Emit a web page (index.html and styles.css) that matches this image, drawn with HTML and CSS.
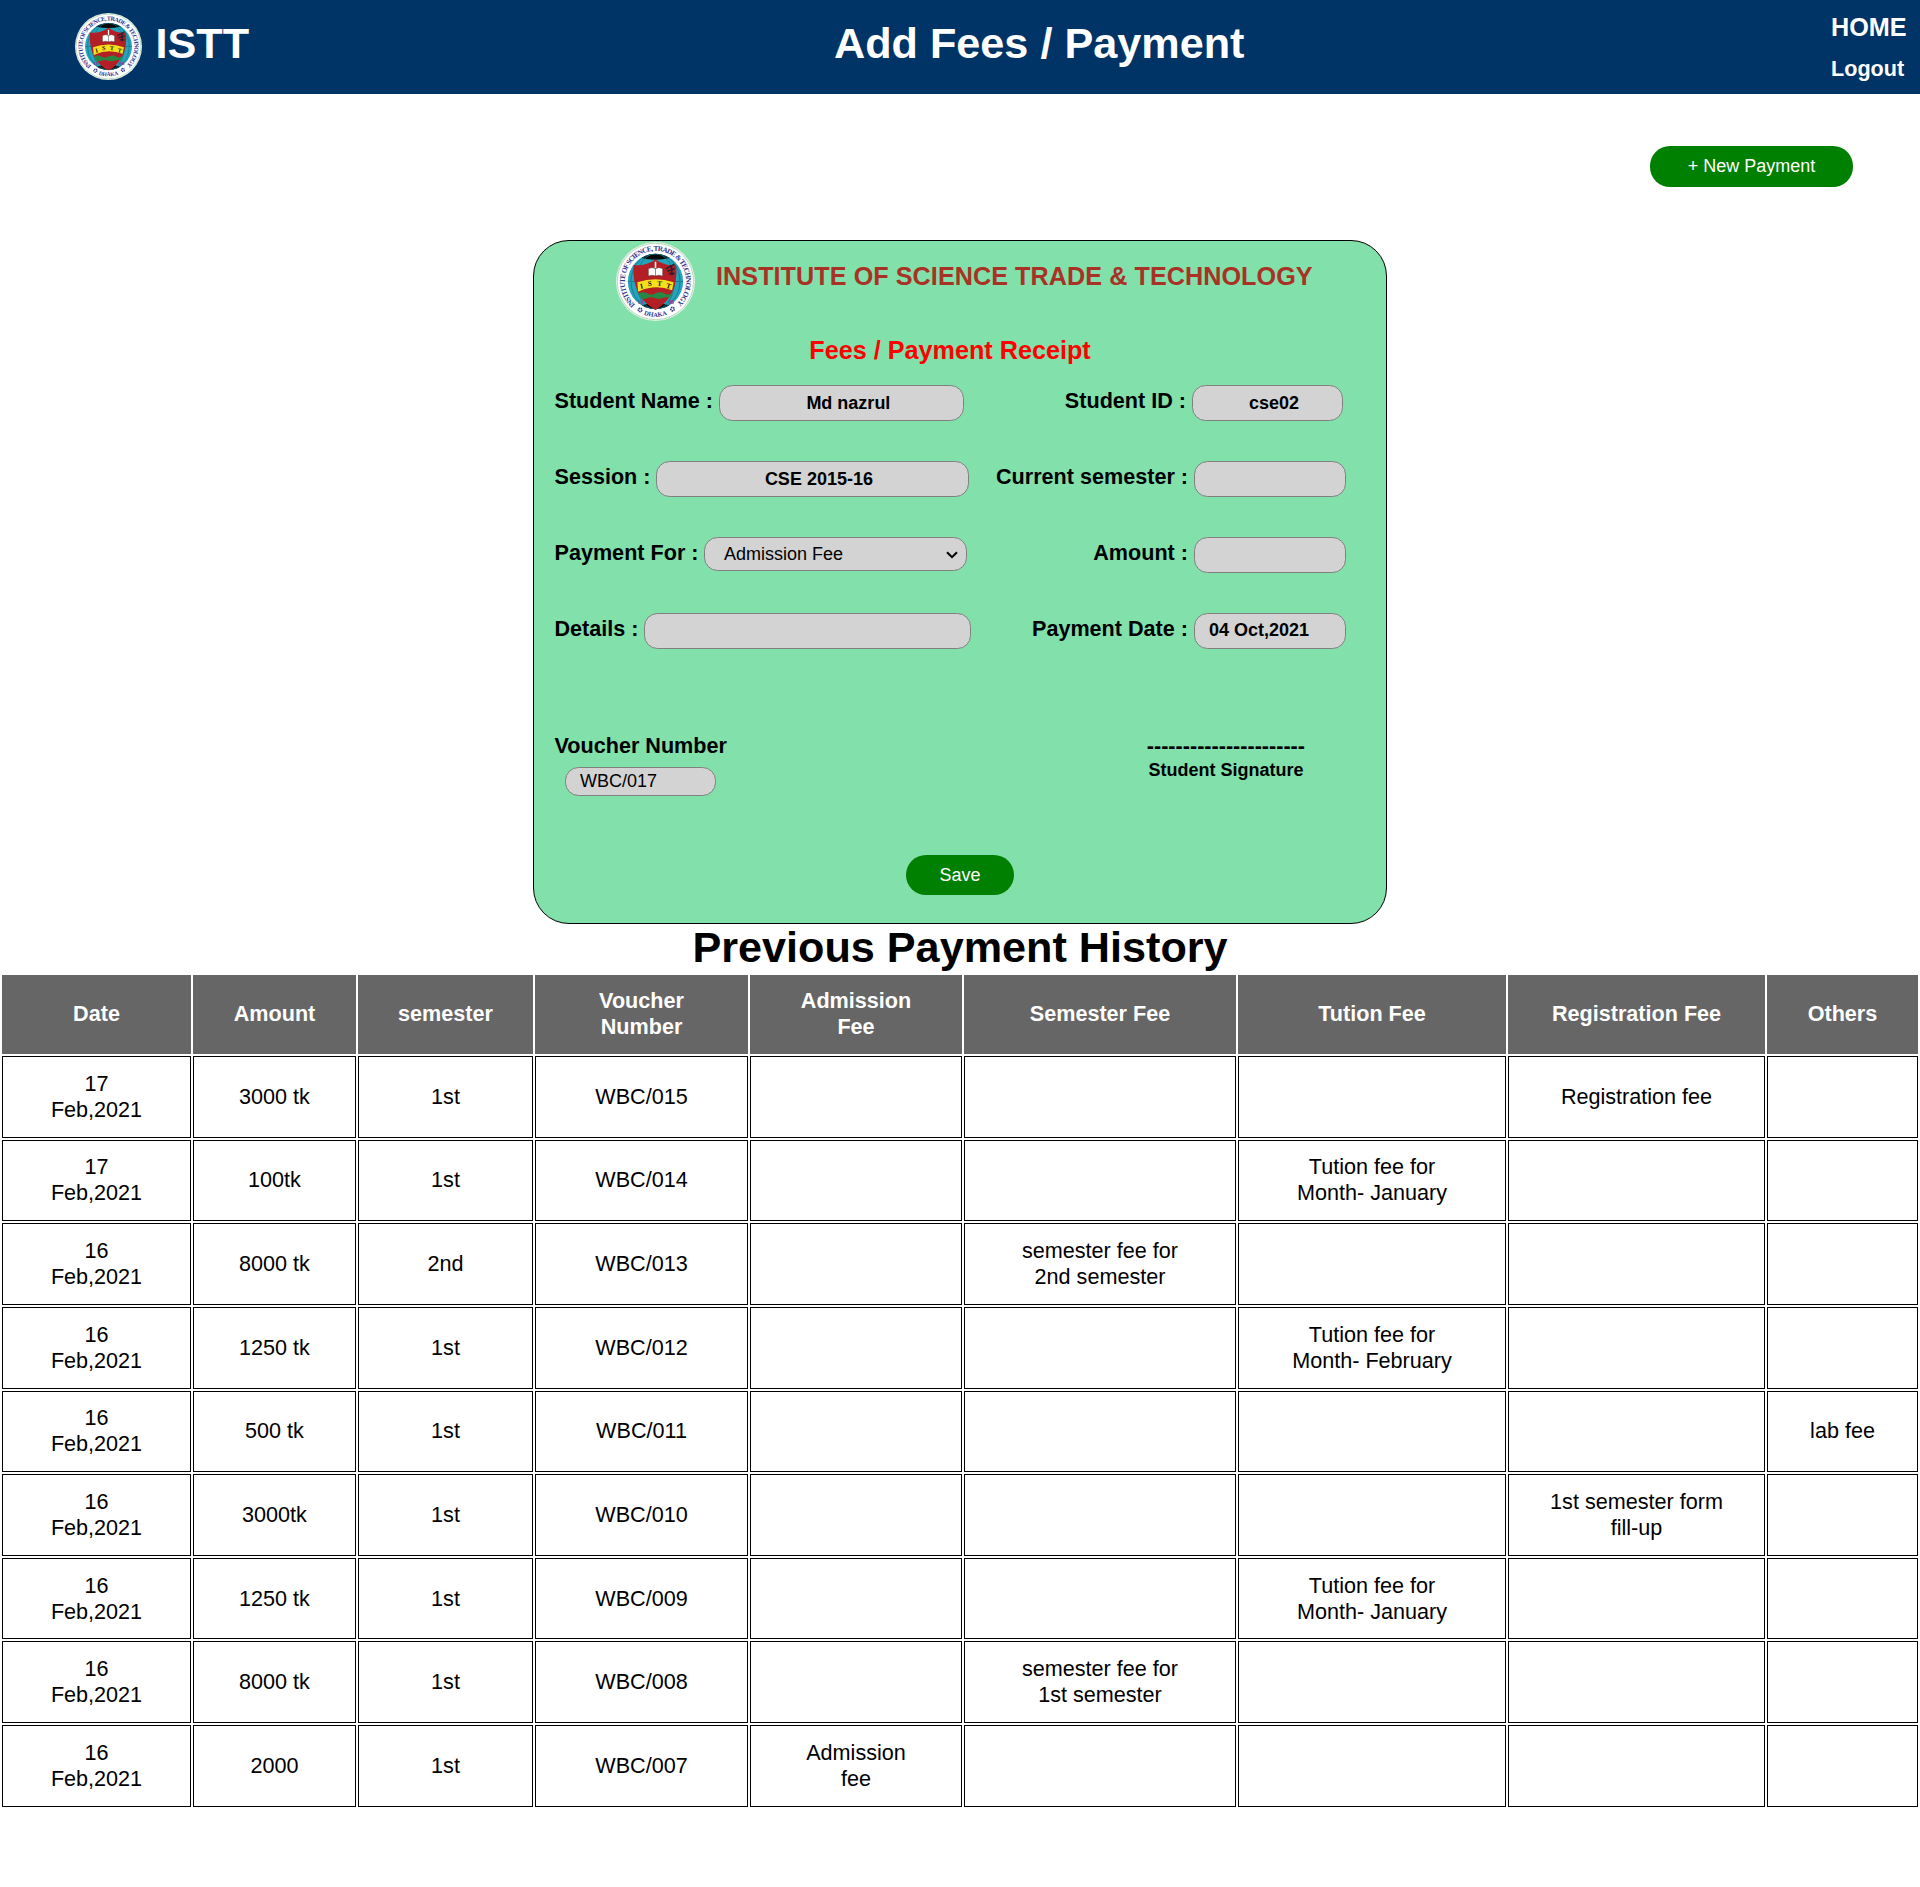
FILE: index.html
```html
<!DOCTYPE html>
<html lang="en">
<head>
<meta charset="utf-8">
<title>Add Fees / Payment</title>
<link rel="stylesheet" href="styles.css">
</head>
<body>
<svg class="defs" width="0" height="0" aria-hidden="true">
  <defs>
    <clipPath id="globe"><circle cx="50" cy="50" r="35"/></clipPath>
    <path id="ring-top" d="M24.5 79.2 A38.8 38.8 0 1 1 75.5 79.2"/>
    <path id="ring-bottom" d="M23 85.5 A44.7 44.7 0 0 0 77 85.5"/>
    <symbol id="seal" viewBox="0 0 100 100">
      <circle cx="50" cy="50" r="50" fill="#e4f3e6"/>
      <circle cx="50" cy="50" r="48.3" fill="#fff" stroke="#9fc4a6" stroke-width=".8"/>
      <circle cx="50" cy="50" r="35" fill="#25a3bb"/>
      <g clip-path="url(#globe)">
        <path d="M34 14 H66 L69 20 Q50 25 31 20Z M29 81 Q50 74 71 81 L66 90 H34Z" fill="#050808"/>
        <g fill="none" stroke="#17718c" stroke-width=".9">
          <ellipse cx="50" cy="50" rx="31" ry="35"/><ellipse cx="50" cy="50" rx="24" ry="35"/>
          <path d="M15 50 H85"/>
        </g>
      </g>
      <path d="M22 29 Q37 31 50 22 Q63 31 76 29 Q78 49 71 64 Q64 78 50 86 Q35 78 28 64 Q21 49 22 29Z" fill="#b31f25"/>
      <path d="M27 51 Q50 43 73 51 L71 61 Q50 53 30 62 L28 63Z" fill="#f6df1b"/>
      <path d="M29 65 q5 -3 10 0 t11 0 t11 0 t10 0 l-3 6 q-5 -2 -9 0 t-10 0 t-9 0 t-9 0Z" fill="#278844"/>
      <path d="M41 34 Q46 31 50 34 Q54 31 59 34 V43 Q54 41 50 43 Q46 41 41 43Z" fill="#fff" stroke="#333" stroke-width=".5"/>
      <path d="M50 34 V43" stroke="#333" stroke-width=".7"/>
      <path d="M49 25 H51 V33 H49Z" fill="#fff"/>
      <path d="M63 34 L74 28 M65 37 L74 34 M70 29 L71 42 M67 40 H74" stroke="#25202b" stroke-width="2" fill="none"/>
      <g class="seal-band"><text x="33" y="58.8" transform="rotate(-14 33 58)">I</text><text x="43" y="55.5" transform="rotate(-5 43 55)">S</text><text x="55" y="55.5" transform="rotate(5 55 55)">T</text><text x="66" y="58.8" transform="rotate(14 66 58)">T</text></g>
      <text class="seal-year" x="31" y="78">19</text><text class="seal-year" x="70" y="78">98</text>
      <g fill="none" stroke="#33358e" stroke-width="2" stroke-dasharray="1.8 .7"><circle cx="30.5" cy="86" r="2.2"/><circle cx="71.5" cy="85" r="2.2"/></g>
      <text class="seal-ring"><textPath href="#ring-top" textLength="186" lengthAdjust="spacing">INSTITUTE OF SCIENCE, TRADE &amp; TECHNOLOGY</textPath></text>
      <text class="seal-ring seal-city"><textPath href="#ring-bottom" startOffset="50%" text-anchor="middle">DHAKA</textPath></text>
    </symbol>
  </defs>
</svg>

<header class="topbar">
  <div class="brand"><svg class="brand-logo"><use href="#seal"/></svg><span>ISTT</span></div>
  <h1 class="topbar-title">Add Fees / Payment</h1>
  <nav class="nav"><a class="nav-home">HOME</a><a class="nav-logout">Logout</a></nav>
</header>

<div class="toolbar"><button class="btn btn-new">+ New Payment</button></div>

<section class="receipt">
  <div class="receipt-head">
    <svg class="receipt-logo"><use href="#seal"/></svg>
    <h2 class="institute">INSTITUTE OF SCIENCE TRADE &amp; TECHNOLOGY</h2>
  </div>
  <h3 class="receipt-title">Fees / Payment Receipt</h3>
  <div class="row row-first">
    <label>Student Name :</label><div class="field name">Md nazrul</div>
    <label class="second">Student ID :</label><div class="field id">cse02</div>
  </div>
  <div class="row">
    <label>Session :</label><div class="field session">CSE 2015-16</div>
    <label class="second">Current semester :</label><div class="field short"></div>
  </div>
  <div class="row">
    <label>Payment For :</label>
    <div class="field select">Admission Fee<svg class="chevron" viewBox="0 0 12 8"><path d="M1 1.3 L6 6.2 L11 1.3" fill="none" stroke="#000" stroke-width="2"/></svg></div>
    <label class="second">Amount :</label><div class="field short"></div>
  </div>
  <div class="row">
    <label>Details :</label><div class="field details"></div>
    <label class="second">Payment Date :</label><div class="field short date">04 Oct,2021</div>
  </div>
  <div class="receipt-foot">
    <div><div class="voucher-label">Voucher Number</div><div class="field voucher">WBC/017</div></div>
    <div class="signature"><div class="sign-line">----------------------</div><div class="sign-text">Student Signature</div></div>
  </div>
  <button class="btn btn-save">Save</button>
</section>

<h2 class="history-title">Previous Payment History</h2>
<table class="history">
  <colgroup><col class="c1"><col class="c2"><col class="c3"><col class="c4"><col class="c5"><col class="c6"><col class="c7"><col class="c8"><col class="c9"></colgroup>
  <tr><th>Date</th><th>Amount</th><th>semester</th><th>Voucher<br>Number</th><th>Admission<br>Fee</th><th>Semester Fee</th><th>Tution Fee</th><th>Registration Fee</th><th>Others</th></tr>
  <tr><td>17<br>Feb,2021</td><td>3000 tk</td><td>1st</td><td>WBC/015</td><td></td><td></td><td></td><td>Registration fee</td><td></td></tr>
  <tr><td>17<br>Feb,2021</td><td>100tk</td><td>1st</td><td>WBC/014</td><td></td><td></td><td>Tution fee for<br>Month- January</td><td></td><td></td></tr>
  <tr><td>16<br>Feb,2021</td><td>8000 tk</td><td>2nd</td><td>WBC/013</td><td></td><td>semester fee for<br>2nd semester</td><td></td><td></td><td></td></tr>
  <tr><td>16<br>Feb,2021</td><td>1250 tk</td><td>1st</td><td>WBC/012</td><td></td><td></td><td>Tution fee for<br>Month- February</td><td></td><td></td></tr>
  <tr><td>16<br>Feb,2021</td><td>500 tk</td><td>1st</td><td>WBC/011</td><td></td><td></td><td></td><td></td><td>lab fee</td></tr>
  <tr><td>16<br>Feb,2021</td><td>3000tk</td><td>1st</td><td>WBC/010</td><td></td><td></td><td></td><td>1st semester form<br>fill-up</td><td></td></tr>
  <tr><td>16<br>Feb,2021</td><td>1250 tk</td><td>1st</td><td>WBC/009</td><td></td><td></td><td>Tution fee for<br>Month- January</td><td></td><td></td></tr>
  <tr><td>16<br>Feb,2021</td><td>8000 tk</td><td>1st</td><td>WBC/008</td><td></td><td>semester fee for<br>1st semester</td><td></td><td></td><td></td></tr>
  <tr><td>16<br>Feb,2021</td><td>2000</td><td>1st</td><td>WBC/007</td><td>Admission<br>fee</td><td></td><td></td><td></td><td></td></tr>
</table>
</body>
</html>
```
FILE: styles.css
```css
* { box-sizing: border-box; }
body {
  margin: 0;
  background: #fff;
  color: #000;
  font-family: "Liberation Sans", Arial, sans-serif;
  font-size: 21.6px;
}
h1, h2, h3 { margin: 0; }
.defs { display: block; }

.seal-ring { font: bold 9.2px "Liberation Serif", serif; fill: #33358e; }
.seal-city { font-size: 8.2px; }
.seal-band { font: bold 9px "Liberation Serif", serif; fill: #111; text-anchor: middle; }
.seal-year { font: bold 7px "Liberation Serif", serif; fill: #b0258c; text-anchor: middle; }

.topbar {
  height: 94px;
  background: #003366;
  color: #fff;
  display: grid;
  grid-template-columns: 834px 1fr 89px;
  font-weight: bold;
}
.brand {
  display: flex;
  align-items: flex-start;
  gap: 13.5px;
  padding: 13px 0 0 75px;
  font-size: 43.2px;
  line-height: 60px;
}
.brand-logo { width: 67px; height: 67px; flex: none; }
.topbar-title { font-size: 43.2px; line-height: 60px; padding-top: 13px; }
.nav { display: flex; flex-direction: column; padding-top: 12px; }
.nav-home { font-size: 25.2px; line-height: 30px; }
.nav-logout { font-size: 21.6px; line-height: 26px; margin-top: 14px; }

.toolbar { display: flex; justify-content: flex-end; padding: 52px 67px 53px 0; }
.btn {
  border: 0;
  padding: 0;
  border-radius: 20px;
  background: #008000;
  color: #fff;
  font: 18px "Liberation Sans", Arial, sans-serif;
}
.btn-new { width: 203px; height: 41px; }
.btn-save { display: block; width: 108px; height: 40px; margin: 59px auto 0; }

.receipt {
  width: 854px;
  height: 684px;
  margin: 0 auto;
  border: 1px solid #000;
  border-radius: 36px;
  background: #82e0aa;
}
.receipt-head { display: flex; align-items: flex-start; padding: 1px 0 0 82px; }
.receipt-logo { width: 79px; height: 79px; }
.institute {
  margin-left: 21px;
  padding-top: 19px;
  font-size: 25.2px;
  line-height: 30px;
  letter-spacing: .05px;
  color: #a93226;
  white-space: nowrap;
}
.receipt-title {
  width: 832px;
  margin-top: 14px;
  font-size: 25.2px;
  line-height: 30px;
  color: #ff0000;
  text-align: center;
}
.row {
  display: flex;
  align-items: flex-start;
  gap: 6px;
  height: 76px;
  padding: 0 40px 0 20.5px;
}
.row-first { margin-top: 20px; padding-right: 43px; }
label { padding-top: 3px; font-weight: bold; line-height: 25px; white-space: nowrap; }
.second { margin-left: auto; }
.field {
  flex: none;
  height: 36px;
  border: 1px solid #808080;
  border-radius: 13.5px;
  background: #d3d3d3;
  font-size: 18px;
  font-weight: bold;
  line-height: 34px;
  padding-left: 13px;
  text-align: center;
}
.name { width: 245px; margin-left: .5px; }
.id { width: 151px; }
.session { width: 313px; margin-left: -.6px; }
.short { width: 152px; }
.details { width: 327px; margin-left: -.6px; }
.date { text-align: left; padding-left: 14px; line-height: 32px; }
.select {
  display: flex;
  align-items: center;
  justify-content: space-between;
  width: 263px;
  height: 34px;
  margin-left: -.6px;
  padding: 0 8px 0 19px;
  font-weight: normal;
  line-height: 32px;
}
.chevron { width: 12px; height: 8px; margin-top: 2px; }
.receipt-foot { display: flex; justify-content: space-between; padding: 44px 81px 0 20.5px; }
.voucher-label { font-weight: bold; line-height: 25px; }
.voucher {
  width: 151px;
  height: 29px;
  margin: 9px 0 0 10.5px;
  padding-left: 14px;
  font-weight: normal;
  line-height: 26px;
  text-align: left;
}
.signature { text-align: center; font-weight: bold; }
.sign-line { line-height: 25px; }
.sign-text { font-size: 18px; line-height: 22px; margin-top: 1px; }

.history-title { font-size: 43.2px; line-height: 47px; padding-bottom: 2px; text-align: center; }
.history { width: 1920px; table-layout: fixed; border-collapse: separate; border-spacing: 2px; }
.history th, .history td { padding: 13.3px 0; line-height: 26px; text-align: center; }
.history th { height: 79px; padding: 13px 0 14px; background: #666; color: #fff; }
.history td { height: 81.65px; border: 1px solid #000; }
.c1 { width: 189px; }
.c2 { width: 163px; }
.c3 { width: 175px; }
.c4 { width: 213px; }
.c5 { width: 212px; }
.c6 { width: 272px; }
.c7 { width: 268px; }
.c8 { width: 257px; }
.c9 { width: 151px; }
```
